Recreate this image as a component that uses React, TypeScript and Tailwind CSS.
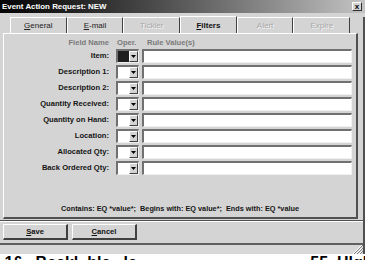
const rows = [
  "Item:",
  "Description 1:",
  "Description 2:",
  "Quantity Received:",
  "Quantity on Hand:",
  "Location:",
  "Allocated Qty:",
  "Back Ordered Qty:",
];

const tabs = [
  { label: "General", key: "G", state: "normal" },
  { label: "E-mail", key: "E", state: "normal" },
  { label: "Tickler", key: "", state: "disabled" },
  { label: "Filters", key: "F", state: "active" },
  { label: "Alert", key: "", state: "disabled" },
  { label: "Expire", key: "", state: "disabled" },
];

const Tab = ({ label, keyChar, state }: { label: string; keyChar: string; state: string }) => {
  const rest = keyChar ? label.slice(1) : label;
  return (
    <div
      className={`flex h-[16px] w-[56.7px] items-center justify-center border-t border-l border-t-white border-l-white border-r border-r-[#404040] pt-[1px] text-[8px] ${
        state === "active"
          ? "font-bold text-[#111] -mt-[1px] h-[17px]"
          : state === "disabled"
          ? "text-[#a8a8a8] [text-shadow:1px_1px_0_#f4f4f4]"
          : "text-[#222]"
      }`}
    >
      {keyChar && <span className="underline">{keyChar}</span>}
      {rest}
    </div>
  );
};

const Combo = ({ dark }: { dark: boolean }) => (
  <div className="flex h-[14px] w-[23px] border-t-2 border-l-2 border-t-[#707070] border-l-[#707070] border-b border-r border-b-[#f0f0f0] border-r-[#f0f0f0] bg-white">
    <div className={`flex-1 ${dark ? "bg-[#1e1e1e]" : "bg-white"}`} />
    <div className="flex w-[9px] items-center justify-center border-t border-l border-t-white border-l-white border-r border-b border-r-[#404040] border-b-[#404040] bg-[#d4d4d4]">
      <svg width="5" height="3" viewBox="0 0 5 3">
        <path d="M0 0h5L2.5 3z" fill="#000" />
      </svg>
    </div>
  </div>
);

const Button = ({ keyChar, rest }: { keyChar: string; rest: string }) => (
  <div className="flex h-[16px] w-[65px] items-center justify-center border-t border-l border-t-white border-l-white border-r-2 border-b-2 border-r-[#404040] border-b-[#404040] text-[7.6px] font-bold text-[#111]">
    <span className="underline">{keyChar}</span>
    {rest}
  </div>
);

export default function App() {
  return (
    <div className="relative h-[260px] w-[365px] overflow-hidden bg-[#d4d4d4] font-['Liberation_Sans',Arial,sans-serif]">
      {/* Title bar */}
      <div className="flex h-[13px] items-center justify-between bg-gradient-to-r from-[#050505] via-[#5a5a5a] to-[#c4c4c4] pl-[2px] pr-[3px]">
        <span className="text-[7.9px] font-bold leading-none text-white">Event Action Request: NEW</span>
        <div className="flex h-[9px] w-[10px] items-center justify-center border-t border-l border-t-white border-l-white border-r border-b border-r-[#303030] border-b-[#303030] bg-[#d4d4d4] text-[8px] font-bold leading-none text-black">
          x
        </div>
      </div>

      <div className="border-r-2 border-r-[#505050]">
        {/* Tabs */}
        <div className="mt-[4px] flex pl-[10px]">
          {tabs.map((t) => (
            <Tab key={t.label} label={t.label} keyChar={t.key} state={t.state} />
          ))}
        </div>

        {/* Panel */}
        <div className="ml-[3px] flex h-[186px] w-[355px] flex-col border-t border-l border-t-white border-l-white border-r-2 border-b-2 border-r-[#505050] border-b-[#505050]">
          <div className="mt-[4px] flex h-[10px] items-center text-[7.6px] font-bold text-[#7a7a7a]">
            <div className="w-[105px] text-right">Field Name</div>
            <div className="ml-[8px] w-[26px]">Oper.</div>
            <div className="ml-[4px]">Rule Value(s)</div>
          </div>
          <div className="mt-[1px] flex flex-col gap-[2px]">
            {rows.map((r, i) => (
              <div key={r} className="flex h-[14px] items-center">
                <div className="w-[105px] text-right text-[7.6px] font-bold text-[#151515]">{r}</div>
                <div className="ml-[7px]">
                  <Combo dark={i === 0} />
                </div>
                <div className="ml-[3px] h-[14px] w-[210px] border-t-2 border-l-2 border-t-[#707070] border-l-[#707070] border-b border-r border-b-[#f0f0f0] border-r-[#f0f0f0] bg-white" />
              </div>
            ))}
          </div>
          <div className="mt-auto mb-[2px] text-center text-[7.3px] font-bold text-[#151515]">
            Contains: EQ *value*;&nbsp; Begins with: EQ value*;&nbsp; Ends with: EQ *value
          </div>
        </div>

        {/* Separator */}
        <div className="mt-[1px] h-[2px] border-t border-t-[#505050] border-b border-b-white" />

        {/* Buttons */}
        <div className="mt-[2px] flex gap-[4px] pl-[3px]">
          <Button keyChar="S" rest="ave" />
          <Button keyChar="C" rest="ancel" />
        </div>

        {/* Status bar */}
        <div className="mt-[3px] flex h-[11px] items-end justify-end border-t-2 border-t-[#606060] bg-[#d8d8d8]">
          <svg width="12" height="10" viewBox="0 0 12 10">
            <path d="M11 1L2 10M11 4L5 10M11 7L8 10" stroke="#ffffff" strokeWidth="1" />
            <path d="M12 1L3 10M12 4L6 10M12 7L9 10" stroke="#808080" strokeWidth="1" />
          </svg>
        </div>
      </div>

      {/* Underlying window text, cut off */}
      <div className="h-[10px] overflow-hidden bg-white">
        <div className="mt-[1px] whitespace-nowrap text-[16px] font-bold leading-[16px] text-black">
          &nbsp;1£&nbsp;&nbsp;&nbsp;Backl&nbsp; ble&nbsp;&nbsp; le&nbsp;&nbsp;&nbsp;&nbsp;&nbsp;&nbsp;&nbsp;&nbsp;&nbsp;&nbsp;&nbsp;&nbsp;&nbsp;&nbsp;&nbsp;&nbsp;&nbsp;&nbsp;&nbsp;&nbsp;&nbsp;&nbsp;&nbsp;&nbsp;&nbsp;&nbsp;&nbsp;&nbsp;&nbsp;&nbsp;&nbsp;&nbsp;&nbsp;&nbsp;&nbsp;&nbsp;&nbsp;&nbsp; 55&nbsp; Hlgh Lbe&nbsp; Ga
        </div>
      </div>
    </div>
  );
}
